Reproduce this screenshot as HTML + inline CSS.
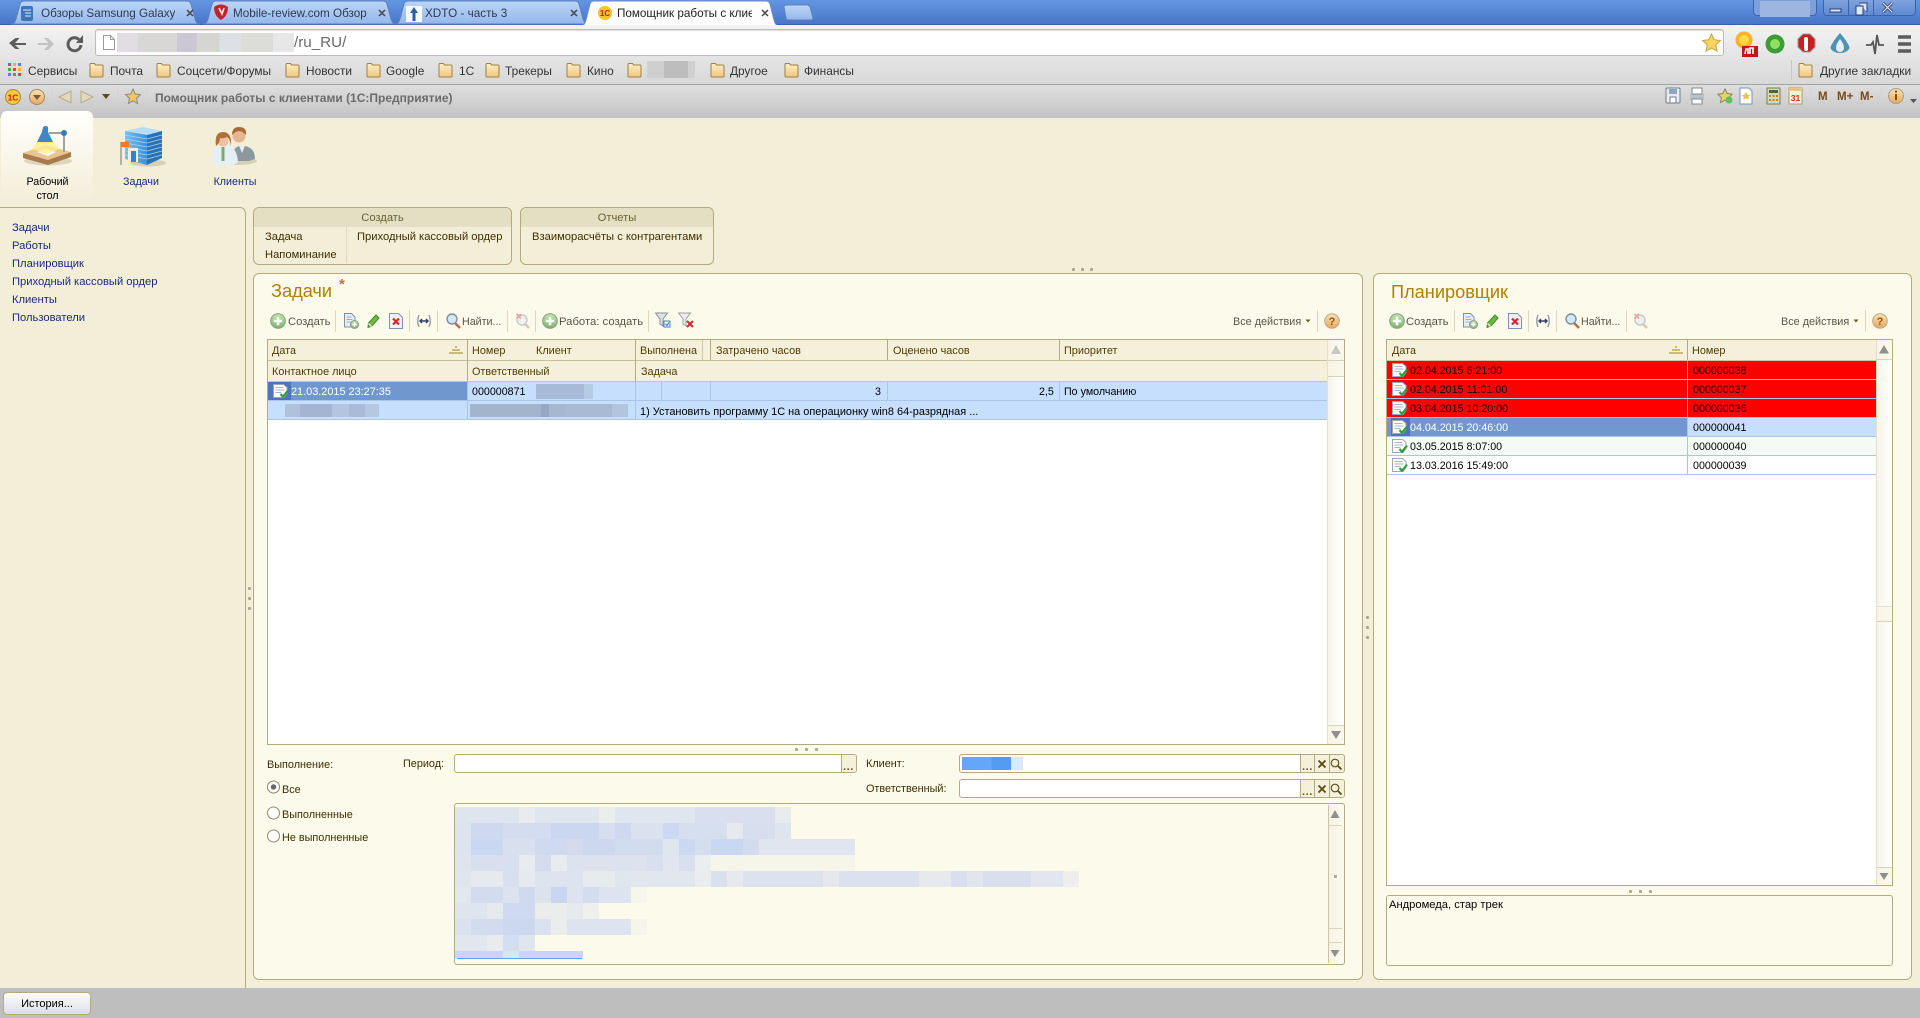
<!DOCTYPE html>
<html lang="ru"><head><meta charset="utf-8"><title>Помощник работы с клиентами</title>
<style>
html,body{margin:0;padding:0;width:1920px;height:1018px;overflow:hidden;background:#f3eed8}
body{position:relative;font:11.2px/14px "Liberation Sans","Noto Sans CJK SC",sans-serif;color:#3f3000}
div,span,svg{position:absolute}
svg{overflow:visible}
.t{white-space:nowrap;line-height:14px;height:14px;margin-top:1px}
.n{font-size:10.7px}
.b{background:#fff}
.lk{color:#1a2b80;left:12px}
.tb{color:#5a5545}
.hd{color:#4f3c00;font-size:10.85px}
.k{color:#000}
.w{color:#fff}
.lb{color:#3c2e00;font-size:10.85px}
.dv{width:1px;height:22px;top:310px;background:#dcd7bd}
.dot{width:3px;height:3px;background:#aca88f;border-radius:1px}
.line{background:#b3ab7f}
.rl{background:#a9c6e8;height:1px}
.m rect{height:1px}
.tabt{font-size:11.7px;color:#2d3a55;overflow:hidden;top:6px;height:15px;line-height:15px;white-space:nowrap}
.bm{font-size:11.9px;color:#333;top:64px;height:14px;line-height:14px;white-space:nowrap}
.sbtn{background:linear-gradient(90deg,#f7f4e4,#fbf9ee);border-bottom:1px solid #d8d4bc}
</style></head><body>
<svg width="0" height="0" style="left:0;top:0"><defs>
<linearGradient id="gt" x1="0" y1="0" x2="0" y2="1"><stop offset="0" stop-color="#bdd5f6"/><stop offset="1" stop-color="#94b8ea"/></linearGradient>
<linearGradient id="gg" x1="0" y1="0" x2="0" y2="1"><stop offset="0" stop-color="#c5e3b0"/><stop offset="1" stop-color="#78b868"/></linearGradient>
<linearGradient id="go" x1="0" y1="0" x2="0" y2="1"><stop offset="0" stop-color="#fbe3b4"/><stop offset="1" stop-color="#e7a75a"/></linearGradient>
<linearGradient id="gf" x1="0" y1="0" x2="0" y2="1"><stop offset="0" stop-color="#fdeec6"/><stop offset="1" stop-color="#f0c77e"/></linearGradient>
<linearGradient id="gb" x1="0" y1="0" x2="1" y2="0"><stop offset="0" stop-color="#7cc0f0"/><stop offset="1" stop-color="#3a90d8"/></linearGradient>
<symbol id="plus" viewBox="0 0 16 16"><circle cx="8" cy="8" r="7.3" fill="url(#gg)" stroke="#8e9a86"/><path d="M8 3.8v8.4M3.8 8h8.4" stroke="#fff" stroke-width="2.6"/></symbol>
<symbol id="nd" viewBox="0 0 16 16"><path d="M1.5 .5h7l3.500 3.500v10h-10.500z" fill="#e8eef6" stroke="#7d93ad"/><path d="M3.500 4h5M3.500 6.500h6M3.500 9h4" stroke="#9ab0c8"/><circle cx="11.500" cy="11.500" r="4" fill="url(#gg)" stroke="#8e9a86"/><path d="M11.500 9.300v4.400M9.300 11.500h4.400" stroke="#fff" stroke-width="1.500"/></symbol>
<symbol id="pen" viewBox="0 0 13 14"><path d="M9 1l3 3-7 8-4 1.500L1.500 9z" fill="#6fbb3f" stroke="#3e8a2a"/><path d="M1.500 9.500l3 3" stroke="#dcecc8" stroke-width="1.500"/></symbol>
<symbol id="xd" viewBox="0 0 14 16"><path d="M.5.5h9l4 4v11h-13z" fill="#eef3f9" stroke="#7d93ad"/><path d="M4 5.500l6 6M10 5.500l-6 6" stroke="#d6242a" stroke-width="2.200"/></symbol>
<symbol id="ar" viewBox="0 0 16 14"><path d="M3 1Q.5 7 3 13M13 1q2.500 6 0 12" fill="none" stroke="#8a94a6" stroke-width="1.300"/><path d="M4 7h8M6 5L4 7l2 2M10 5l2 2-2 2" fill="none" stroke="#2d3f66" stroke-width="1.400"/></symbol>
<symbol id="mg" viewBox="0 0 15 16"><path d="M9 10l5 5" stroke="#b46b3e" stroke-width="2.400"/><circle cx="6" cy="6" r="5" fill="#d5e6f7" stroke="#7d8ea3" stroke-width="1.400"/></symbol>
<symbol id="mx" viewBox="0 0 16 16"><path d="M9 10l5 5" stroke="#dcc4ae" stroke-width="2.400"/><circle cx="7" cy="7" r="5" fill="#eef1f2" stroke="#c9c9c4" stroke-width="1.400"/><path d="M1.500 1l4.500 4.500M6 1L1.500 5.500" stroke="#e4a5a0" stroke-width="1.800"/></symbol>
<symbol id="fn" viewBox="0 0 16 16"><path d="M.5 1h12l-4.500 6v7l-3 -2v-5z" fill="#dfe2e4" stroke="#868e96"/><path d="M9 9h6v6H9z" fill="#eaf3fb" stroke="#4d83bf"/><path d="M10.500 12l1.500 1.500 2-3" fill="none" stroke="#2e6fb8"/></symbol>
<symbol id="fx" viewBox="0 0 16 16"><path d="M.5 1h12l-4.500 6v7l-3 -2v-5z" fill="#ebecec" stroke="#9aa0a5"/><path d="M9 9l6 6M15 9l-6 6" stroke="#cf2a2a" stroke-width="2"/></symbol>
<symbol id="hp" viewBox="0 0 16 16"><circle cx="8" cy="8" r="7.300" fill="url(#go)" stroke="#bda98a"/><text x="8" y="12" text-anchor="middle" font-family="Liberation Sans" font-size="11" font-weight="bold" fill="#8a5a1f">?</text></symbol>
<symbol id="chk" viewBox="0 0 16 14"><path d="M.5 .5h10l3.500 3v6l-3 4H.5z" fill="#fff" stroke="#9aa8ba"/><path d="M2.500 3.500h8M2.500 6h9M2.500 8.500h6" stroke="#a6b4c6"/><path d="M7.500 10l2.500 2.800L15 6.500" fill="none" stroke="#2e9e3a" stroke-width="2.200"/></symbol>
<symbol id="fo" viewBox="0 0 15 16"><path d="M1 4V2.500Q1 1.500 2 1.500h3.500l1 1.500H13q1 0 1 1v10q0 1-1 1H2q-1 0-1-1z" fill="url(#gf)" stroke="#a08043"/></symbol>
<symbol id="dn" viewBox="0 0 12 6"><path d="M1 0h10L6 6z" fill="currentColor"/></symbol>
<symbol id="sort" viewBox="0 0 14 8"><path d="M6 0h2v2H6zM3 3h8v2H3zM0 6h14v2H0z" fill="#c9bb7d"/></symbol>
</defs></svg>

<!-- browser tab strip -->
<div style="left:0;top:0;width:1920px;height:25px;background:linear-gradient(#6396e2,#4976c8);border-bottom:1px solid #3c5fa8;box-sizing:border-box"></div>
<svg style="left:0;top:0" width="830" height="26">
<path d="M11 24c3 0 4-2 5-5l4-15q1-3 4-3h163q3 0 4 3l4 15c1 3 2 5 5 5z" fill="url(#gt)" stroke="#5b80bf"/>
<path d="M203 24c3 0 4-2 5-5l4-15q1-3 4-3h167q3 0 4 3l4 15c1 3 2 5 5 5z" fill="url(#gt)" stroke="#5b80bf"/>
<path d="M395 24c3 0 4-2 5-5l4-15q1-3 4-3h167q3 0 4 3l4 15c1 3 2 5 5 5z" fill="url(#gt)" stroke="#5b80bf"/>
<path d="M580 26c3 0 5-2 6-6l4-16q1-3 4-3h172q3 0 4 3l4 16c1 4 3 6 6 6z" fill="#fdfdfd" stroke="#6a8bc4"/>
<path d="M784 7q0-2 2-2h21q2 0 3 2l3 11q0 2-2 2h-22q-3 0-3-2z" fill="url(#gt)" stroke="#5b80bf"/>
<rect x="21" y="6" width="12" height="15" rx="2" fill="#3f74b8"/><path d="M23 10h8M25 13h6M25 16h6" stroke="#dbe7f6"/>
<path d="M214 7q7-5 14 0 0 9-7 13-7-4-7-13z" fill="#c8232c"/><path d="M219 8l3 6 2-6" fill="none" stroke="#fff" stroke-width="1.500"/>
<rect x="406" y="6" width="16" height="16" fill="#f4f7fb"/><path d="M414 7l4 6h-2.500v8h-3v-8H410z" fill="#2f5f9e"/>
<circle cx="605" cy="13" r="7" fill="#f6c230"/><text x="605" y="16" text-anchor="middle" font-family="Liberation Sans" font-size="8" font-weight="bold" fill="#c8201c">1С</text>
<path d="M187 10l6 6M193 10l-6 6M379 10l6 6M385 10l-6 6M571 10l6 6M577 10l-6 6M762 10l6 6M768 10l-6 6" stroke="#444" stroke-width="1.500"/>
</svg>
<div class="tabt" style="left:41px;width:134px">Обзоры Samsung Galaxy</div>
<div class="tabt" style="left:233px;width:137px">Mobile-review.com Обзор</div>
<div class="tabt" style="left:425px;width:130px">XDTO - часть 3</div>
<div class="tabt" style="left:617px;width:135px;color:#222">Помощник работы с клиентами</div>
<!-- window controls -->
<div style="left:1753px;top:0;width:64px;height:16px;background:#7a9fdc;border:1px solid #3f62a5;border-top:0;border-radius:0 0 4px 4px;box-sizing:border-box"></div>
<div style="left:1760px;top:1px;width:50px;height:16px;background:#9db6df"></div>
<div style="left:1823px;top:0;width:93px;height:16px;background:linear-gradient(#7ea3de,#5f8ad3);border:1px solid #3f62a5;border-top:0;border-radius:0 0 4px 4px;box-sizing:border-box"></div>
<div style="left:1848px;top:0;width:1px;height:16px;background:#3f62a5"></div>
<div style="left:1873px;top:0;width:1px;height:16px;background:#3f62a5"></div>
<svg style="left:1823px;top:0" width="93" height="16"><path d="M7 9h11v3H7z" fill="#dfe8f6" stroke="#2a3f70"/><path d="M33 6h7v9h-7zM36 3h8v9" fill="#dfe8f6" stroke="#2a3f70"/><path d="M60 3l9 9M69 3l-9 9" stroke="#2a3f70" stroke-width="3"/><path d="M60 3l9 9M69 3l-9 9" stroke="#eef" stroke-width="1.200"/></svg>

<!-- address toolbar -->
<div style="left:0;top:25px;width:1920px;height:59px;background:linear-gradient(#f3f3f3,#d8d8d8)"></div>
<svg style="left:0;top:25px" width="120" height="34">
<path d="M26 18H15l4.500-5h-4L9 18l6.500 6h4L15 20h11z" fill="#5c5c5c"/>
<path d="M38 18h10.500L44 13h4l6 6-6 6h-4l4.500-5H38z" fill="#c2c2c2"/>
<path d="M81 20a6.500 6.500 0 1 1-2-5.500" fill="none" stroke="#5c5c5c" stroke-width="3"/><path d="M83 10v8h-7z" fill="#5c5c5c"/>
</svg>
<div style="left:95px;top:29px;width:1629px;height:27px;background:#fff;border:1px solid #bcbcbc;border-radius:3px;box-sizing:border-box;box-shadow:inset 0 1px 1px #ddd"></div>
<svg style="left:103px;top:35px" width="12" height="15"><path d="M.5.5h7l4 4v10H.5z" fill="#fff" stroke="#9a9a9a"/><path d="M7.500.5v4h4" fill="none" stroke="#9a9a9a"/></svg>
<div style="left:117px;top:33px;width:177px;height:19px;background:linear-gradient(90deg,#e2dde2 0 12%,#d9d6d6 12% 34%,#ccc7d4 34% 45%,#d5d5d1 45% 58%,#dde1e5 58% 70%,#dcdcd9 70% 88%,#e7e7e7 88%)"></div>
<div class="t" style="left:294px;top:33px;margin:0;height:19px;line-height:19px;font-size:15.2px;color:#6a6a6a">/ru_RU/</div>
<svg style="left:1702px;top:33px" width="19" height="19" viewBox="0 0 19 19"><path d="M9.500 1l2.700 5.700 6.200.8-4.600 4.300 1.200 6.200-5.500-3-5.500 3 1.200-6.200L.600 7.500l6.200-.8z" fill="#f7d560" stroke="#c9a43a"/></svg>
<svg style="left:1732px;top:30px" width="185" height="30">
<circle cx="12" cy="10" r="8.500" fill="#f7b228"/><circle cx="12" cy="10" r="5" fill="#ffd84a"/>
<rect x="10" y="16" width="16" height="11" fill="#c01818"/><path d="M13 24l1-5h2v4h2v-5h3v6" fill="none" stroke="#fff" stroke-width="1.600"/>
<circle cx="43" cy="14" r="9.500" fill="#3e9c36"/><circle cx="43" cy="14" r="5" fill="#8ee060"/>
<path d="M71 4h7l5 5v8l-5 5h-7l-5-5V9z" fill="#c81e1e" stroke="#9a9a9a"/><rect x="72" y="7" width="4" height="14" rx="2" fill="#fff"/>
<path d="M108 3q7 8 9.500 14a9.500 6 0 0 1-19 0Q101 11 108 3z" fill="#4d93b8"/><path d="M108 9q4 5 4 9a4 4 0 0 1-8 0q0-4 4-9z" fill="#e8eef2"/>
<path d="M134 15h5l2-3 2 12 2-19 2 10h5" fill="none" stroke="#555" stroke-width="1.800"/>
<path d="M166 7h13M166 14h13M166 21h13" stroke="#5c5c5c" stroke-width="3.400"/>
</svg>
<!-- bookmarks -->
<svg style="left:8px;top:63px" width="14" height="14"><g fill="#d94a3c"><rect width="3" height="3"/><rect x="5" width="3" height="3" fill="#e8b23a"/><rect x="10" width="3" height="3" fill="#3a8de8"/><rect y="5" width="3" height="3" fill="#3fae4f"/><rect x="5" y="5" width="3" height="3"/><rect x="10" y="5" width="3" height="3" fill="#e8b23a"/><rect y="10" width="3" height="3" fill="#3a8de8"/><rect x="5" y="10" width="3" height="3" fill="#3fae4f"/><rect x="10" y="10" width="3" height="3"/></g></svg>
<div class="bm" style="left:28px">Сервисы</div>
<svg style="left:89px;top:62px" width="15" height="16"><use href="#fo"/></svg><div class="bm" style="left:110px">Почта</div>
<svg style="left:156px;top:62px" width="15" height="16"><use href="#fo"/></svg><div class="bm" style="left:177px">Соцсети/Форумы</div>
<svg style="left:285px;top:62px" width="15" height="16"><use href="#fo"/></svg><div class="bm" style="left:306px">Новости</div>
<svg style="left:366px;top:62px" width="15" height="16"><use href="#fo"/></svg><div class="bm" style="left:386px">Google</div>
<svg style="left:438px;top:62px" width="15" height="16"><use href="#fo"/></svg><div class="bm" style="left:459px">1С</div>
<svg style="left:485px;top:62px" width="15" height="16"><use href="#fo"/></svg><div class="bm" style="left:505px">Трекеры</div>
<svg style="left:566px;top:62px" width="15" height="16"><use href="#fo"/></svg><div class="bm" style="left:587px">Кино</div>
<svg style="left:627px;top:62px" width="15" height="16"><use href="#fo"/></svg>
<div style="left:647px;top:61px;width:48px;height:17px;background:linear-gradient(90deg,#cfcfcf 0 35%,#bdbdbd 35% 85%,#d0d0d0 85%)"></div>
<svg style="left:710px;top:62px" width="15" height="16"><use href="#fo"/></svg><div class="bm" style="left:730px">Другое</div>
<svg style="left:784px;top:62px" width="15" height="16"><use href="#fo"/></svg><div class="bm" style="left:804px">Финансы</div>
<div style="left:1791px;top:60px;width:1px;height:20px;background:#c8c8c8"></div>
<svg style="left:1798px;top:62px" width="15" height="16"><use href="#fo"/></svg><div class="bm" style="left:1820px">Другие закладки</div>
<div style="left:0;top:84px;width:1920px;height:1px;background:#a3a3a3"></div>

<!-- 1C command panel -->
<div style="left:0;top:85px;width:1920px;height:33px;background:linear-gradient(#dedede,#c4c4c4)"></div>
<svg style="left:0;top:85px" width="150" height="30">
<circle cx="13" cy="12" r="7.500" fill="#f8c93c" stroke="#a28a50"/><text x="13" y="15.500" text-anchor="middle" font-family="Liberation Sans" font-size="8.500" font-weight="bold" fill="#c8201c">1С</text>
<circle cx="37" cy="12" r="7.500" fill="url(#go)" stroke="#a28a70"/><path d="M33 10h8l-4 5z" fill="#7a5a35"/>
<path d="M52 2v20" stroke="#d2d2d2"/>
<path d="M71 6v12L59 12z" fill="#e2d9b8" stroke="#b6ad90"/><path d="M81 6v12l12-6z" fill="#e2d9b8" stroke="#b6ad90"/>
<path d="M102 9h8l-4 5z" fill="#5e4a12"/><path d="M118 2v20M147 2v20" stroke="#d2d2d2"/>
<path d="M133 4l2.200 5 5.300.6-4 3.600 1.100 5.300-4.600-2.700-4.600 2.700 1.100-5.300-4-3.600 5.300-.6z" fill="#eec566" stroke="#8d8d80"/>
</svg>
<div class="t" style="left:155px;top:90px;font-size:12px;font-weight:bold;color:#6c6c6c">Помощник работы с клиентами (1С:Предприятие)</div>
<svg style="left:1660px;top:85px" width="260" height="30">
<rect x="6" y="3" width="14" height="15" rx="1" fill="#e8ecef" stroke="#6d7e92"/><rect x="9" y="4" width="8" height="5" fill="#8fa6bd"/><rect x="10" y="12" width="6" height="6" fill="#fff" stroke="#6d7e92"/>
<rect x="30" y="9" width="14" height="6" fill="#bac2c9"/><rect x="32" y="3" width="10" height="6" fill="#fff" stroke="#8a8a8a"/><rect x="32" y="14" width="10" height="5" fill="#fff" stroke="#8a8a8a"/>
<path d="M65 4l2.200 4.500 5 .7-3.600 3.400 .9 5-4.500-2.400-4.500 2.400 .9-5-3.600-3.400 5-.7z" fill="#e5d36b" stroke="#8c8a60"/><circle cx="69" cy="15" r="3.500" fill="#5fc25c"/>
<path d="M80 3h9l3 3v13H80z" fill="#fff" stroke="#7d93ad"/><path d="M86 7l1.500 2.700 2.800.4-2 1.900.5 2.800-2.800-1.400-2.800 1.400.5-2.800-2-1.900 2.800-.4z" fill="#e7c14f"/>
<rect x="107" y="3" width="13" height="16" fill="#cfdcb6" stroke="#7f7a52"/><rect x="109" y="5" width="9" height="3" fill="#49693a"/><path d="M109 10h2v2h-2zm3.500 0h2v2h-2zm3.500 0h2v2h-2zm-7 4h2v2h-2zm3.500 0h2v2h-2zm3.500 0h2v2h-2z" fill="#c9822b"/>
<rect x="129" y="3" width="13" height="16" fill="#fdf5da" stroke="#b09a6a"/><rect x="129" y="3" width="13" height="3" fill="#e2c885"/>
<text x="135.500" y="16" text-anchor="middle" font-family="Liberation Sans" font-size="8.500" font-weight="bold" fill="#d42b1c">31</text>
<circle cx="236" cy="11" r="7.500" fill="url(#go)" stroke="#a89f86"/><rect x="235" y="9" width="2" height="6" fill="#7a4f12"/><rect x="235" y="5.500" width="2" height="2" fill="#7a4f12"/>
<path d="M250 14h7l-3.500 4z" fill="#555"/>
<path d="M101 2v18M125 2v18M151 2v18M221 2v18" stroke="#d2d2d2"/>
</svg>
<div class="t" style="left:1818px;top:89px;font-weight:bold;font-size:11.500px;color:#7a4a1c">M</div>
<div class="t" style="left:1837px;top:89px;font-weight:bold;font-size:11.500px;color:#7a4a1c">M+</div>
<div class="t" style="left:1860px;top:89px;font-weight:bold;font-size:11.500px;color:#7a4a1c">M-</div>

<!-- sections panel -->
<div style="left:1px;top:111px;width:92px;height:90px;border-radius:6px 6px 0 0;background:linear-gradient(#fffffc,#f3eed8)"></div>
<svg style="left:22px;top:124px" width="52" height="44" viewBox="0 0 52 44">
<ellipse cx="26" cy="37" rx="24" ry="4.500" fill="#dcd6bc"/>
<path d="M1 29L23 21l26 7-23 8z" fill="#e8c690"/><path d="M1 29l25 7v5L1 34zM49 28l-23 8v5l23-8z" fill="#a87a4c"/>
<path d="M15 28l9-3 10 3-8 4z" fill="#fff"/>
<path d="M16 17h14l8 8-14 5-14-5z" fill="#fdee90" opacity=".8"/>
<path d="M21 3q3-2 5 0v5l5 10H15l5-10z" fill="#3f86c6"/><path d="M27 9h15v19" fill="none" stroke="#a2a2a2" stroke-width="2"/><circle cx="42" cy="9" r="3" fill="#2f7fb8"/>
</svg>
<svg style="left:118px;top:125px" width="50" height="44" viewBox="0 0 50 44">
<ellipse cx="30" cy="38" rx="18" ry="3.500" fill="#d5d0b6"/>
<path d="M7 6l18-4 19 4-15 4z" fill="#b6dcf6"/><path d="M7 6l22 4v30L7 34z" fill="url(#gb)"/><path d="M29 10l15-4v27l-15 7z" fill="#2a72b8"/>
<path d="M7 10l22 4 15-4M7 14l22 4 15-4M7 18l22 4 15-4M7 22l22 4 15-4M7 26l22 4 15-4M7 30l22 4 15-4" fill="none" stroke="#a9d3f0" stroke-width=".700"/>
<rect x="10" y="23" width="10" height="14" fill="#e8f0f5"/><rect x="13" y="26" width="5" height="11" fill="#2f84c8"/>
<path d="M3 17v23" stroke="#9c9c9c" stroke-width="1.500"/><rect x="3" y="17" width="8" height="5" fill="#ee7b33"/>
</svg>
<svg style="left:211px;top:126px" width="48" height="42" viewBox="0 0 48 42">
<ellipse cx="24" cy="35" rx="22" ry="4" fill="#d5d0b6"/>
<path d="M22 33q-1-11 6-13h6q10 2 10 13l-6 2H26z" fill="#8d979e"/><path d="M28 20l3 7 3-7z" fill="#e6edf0"/>
<circle cx="28" cy="10" r="6.500" fill="#e8b592"/><path d="M21 9q0-8 7-8 8 0 7 8-4-4-7-4t-7 4z" fill="#a96a33"/>
<path d="M2 36q-1-14 7-17h8q9 3 10 17l-4 3H6z" fill="#e4f0f5"/><path d="M12 21v14" stroke="#79ae62" stroke-width="3"/>
<circle cx="12" cy="15" r="5.500" fill="#edc2a3"/><path d="M5 20Q3 6 12 6t8 14q-1-7-4-9-4 2-7 1 0 5-4 8z" fill="#b0703a"/>
</svg>
<div class="t k n" style="left:0;width:95px;text-align:center;top:174px">Рабочий</div>
<div class="t k n" style="left:0;width:95px;text-align:center;top:188px">стол</div>
<div class="t lk n" style="left:101px;width:80px;text-align:center;top:174px">Задачи</div>
<div class="t lk n" style="left:195px;width:80px;text-align:center;top:174px">Клиенты</div>

<!-- left nav -->
<div style="left:-6px;top:207px;width:250px;height:790px;border:1px solid #b3ab7f;border-radius:0 6px 0 0;box-sizing:content-box"></div>
<div class="t lk" style="top:220px">Задачи</div>
<div class="t lk" style="top:238px">Работы</div>
<div class="t lk" style="top:256px">Планировщик</div>
<div class="t lk" style="top:274px">Приходный кассовый ордер</div>
<div class="t lk" style="top:292px">Клиенты</div>
<div class="t lk" style="top:310px">Пользователи</div>

<!-- command groups -->
<div style="left:253px;top:207px;width:259px;height:58px;box-sizing:border-box;border:1px solid #b3ab7f;border-radius:6px;overflow:hidden"><div style="left:0;top:0;width:257px;height:19px;background:#e3dfc2"></div></div>
<div class="t" style="left:253px;width:259px;text-align:center;top:210px;color:#6a6238">Создать</div>
<div class="t" style="left:265px;top:229px">Задача</div>
<div class="t" style="left:265px;top:247px">Напоминание</div>
<div style="left:346px;top:226px;width:1px;height:37px;background:#dedabf"></div>
<div class="t" style="left:357px;top:229px">Приходный кассовый ордер</div>
<div style="left:520px;top:207px;width:194px;height:58px;box-sizing:border-box;border:1px solid #b3ab7f;border-radius:6px;overflow:hidden"><div style="left:0;top:0;width:192px;height:19px;background:#e3dfc2"></div></div>
<div class="t" style="left:520px;width:194px;text-align:center;top:210px;color:#6a6238">Отчеты</div>
<div class="t" style="left:532px;top:229px">Взаиморасчёты с контрагентами</div>

<div class="dot" style="left:1072px;top:268px"></div><div class="dot" style="left:1081px;top:268px"></div><div class="dot" style="left:1090px;top:268px"></div>
<div class="dot" style="left:248px;top:587px"></div><div class="dot" style="left:248px;top:597px"></div><div class="dot" style="left:248px;top:607px"></div>
<div class="dot" style="left:1366px;top:616px"></div><div class="dot" style="left:1366px;top:626px"></div><div class="dot" style="left:1366px;top:636px"></div>

<!-- Card: Задачи -->
<div style="left:253px;top:273px;width:1110px;height:707px;box-sizing:border-box;background:#fcfaeb;border:1px solid #b3ab7f;border-radius:6px"></div>
<div class="t" style="left:271px;top:280px;margin:0;height:22px;line-height:22px;font-size:18.2px;color:#b08000">Задачи</div>
<div class="t" style="left:339px;top:278px;margin:0;font-size:15px;font-weight:bold;color:#b08000">*</div>
<svg style="left:270px;top:313px" width="16" height="16"><use href="#plus"/></svg><div class="t tb" style="left:288px;top:314px">Создать</div>
<div class="dv" style="left:335px"></div>
<svg style="left:343px;top:313px" width="16" height="16"><use href="#nd"/></svg>
<svg style="left:367px;top:314px" width="13" height="14"><use href="#pen"/></svg>
<svg style="left:389px;top:313px" width="14" height="16"><use href="#xd"/></svg>
<div class="dv" style="left:409px"></div>
<svg style="left:416px;top:314px" width="16" height="14"><use href="#ar"/></svg>
<div class="dv" style="left:437px"></div>
<svg style="left:446px;top:313px" width="15" height="16"><use href="#mg"/></svg><div class="t tb n" style="left:462px;top:314px">Найти...</div>
<div class="dv" style="left:507px"></div>
<svg style="left:515px;top:313px" width="16" height="16"><use href="#mx"/></svg>
<div class="dv" style="left:535px"></div>
<svg style="left:542px;top:313px" width="16" height="16"><use href="#plus"/></svg><div class="t tb" style="left:559px;top:314px;font-size:11.3px">Работа: создать</div>
<div class="dv" style="left:648px"></div>
<svg style="left:655px;top:312px" width="16" height="16"><use href="#fn"/></svg>
<svg style="left:678px;top:312px" width="16" height="16"><use href="#fx"/></svg>
<div class="t tb" style="left:1233px;top:314px;font-size:10.85px">Все действия</div>
<svg style="left:1305px;top:319px;color:#6b5a1f" width="6" height="4"><use href="#dn"/></svg>
<div class="dv" style="left:1317px"></div>
<svg style="left:1324px;top:313px" width="16" height="16"><use href="#hp"/></svg>

<!-- Table left -->
<div class="b" style="left:267px;top:339px;width:1078px;height:406px;box-sizing:border-box;border:1px solid #b3ab7f"></div>
<div style="left:268px;top:340px;width:1059px;height:41px;background:#f4f0dc"></div>
<div class="line" style="left:268px;top:360px;width:1059px;height:1px;opacity:.7"></div>
<div class="line" style="left:268px;top:381px;width:1059px;height:1px;opacity:.7"></div>
<div class="line" style="left:467px;top:340px;width:1px;height:41px"></div>
<div class="line" style="left:635px;top:340px;width:1px;height:41px"></div>
<div class="line" style="left:702px;top:340px;width:1px;height:20px;opacity:.6"></div>
<div class="line" style="left:710px;top:340px;width:1px;height:20px"></div>
<div class="line" style="left:887px;top:340px;width:1px;height:20px"></div>
<div class="line" style="left:1059px;top:340px;width:1px;height:20px"></div>
<div class="t hd" style="left:272px;top:343px">Дата</div>
<svg style="left:449px;top:346px" width="14" height="8"><use href="#sort"/></svg>
<div class="t hd" style="left:472px;top:343px">Номер</div>
<div class="t hd" style="left:536px;top:343px">Клиент</div>
<div class="t hd" style="left:640px;top:343px">Выполнена</div>
<div class="t hd" style="left:716px;top:343px">Затрачено часов</div>
<div class="t hd" style="left:893px;top:343px">Оценено часов</div>
<div class="t hd" style="left:1064px;top:343px">Приоритет</div>
<div class="t hd" style="left:272px;top:364px">Контактное лицо</div>
<div class="t hd" style="left:472px;top:364px">Ответственный</div>
<div class="t hd" style="left:641px;top:364px">Задача</div>

<div style="left:268px;top:382px;width:1059px;height:38px;background:#c5dffc"></div>
<div style="left:268px;top:382px;width:199px;height:18px;background:#7098cf"></div>
<div style="left:268px;top:382px;width:23px;height:18px;background:#4f72c1"></div>
<div class="rl" style="left:268px;top:400px;width:1059px"></div>
<div class="rl" style="left:268px;top:419px;width:1059px"></div>
<div class="rl" style="left:467px;top:382px;width:1px;height:37px"></div>
<div class="rl" style="left:635px;top:382px;width:1px;height:37px"></div>
<div class="rl" style="left:661px;top:382px;width:1px;height:18px"></div>
<div class="rl" style="left:710px;top:382px;width:1px;height:18px"></div>
<div class="rl" style="left:887px;top:382px;width:1px;height:18px"></div>
<div class="rl" style="left:1059px;top:382px;width:1px;height:18px"></div>
<svg style="left:273px;top:384px" width="16" height="14"><use href="#chk"/></svg>
<div class="t w" style="left:291px;top:384px;font-size:10.9px">21.03.2015 23:27:35</div>
<div class="t k n" style="left:472px;top:384px">000000871</div>
<div style="left:536px;top:384px;width:48px;height:15px;background:#a7bbd8"></div><div style="left:584px;top:384px;width:9px;height:15px;background:#b5cbe6"></div>
<div class="t k n" style="left:875px;top:384px">3</div>
<div class="t k n" style="left:1039px;top:384px">2,5</div>
<div class="t k n" style="left:1064px;top:384px">По умолчанию</div>
<div style="left:285px;top:404px;width:94px;height:13px;background:linear-gradient(90deg,#afc2dc 0 16%,#a3b5d0 16% 50%,#b3c5df 50% 68%,#a9bbd6 68% 85%,#b5c8e2 85%)"></div>
<div style="left:470px;top:404px;width:158px;height:13px;background:linear-gradient(90deg,#a3b5cd 0 45%,#96a8c2 45% 50%,#a6b8d0 50% 60%,#a9bbd4 60% 90%,#b3c5de 90%)"></div>
<div class="t k" style="left:640px;top:404px;font-size:10.95px">1) Установить программу 1С на операционку win8 64-разрядная ...</div>
<!-- scrollbar left table -->
<div style="left:1327px;top:340px;width:17px;height:404px;background:linear-gradient(90deg,#f7f5ea,#fff);border-left:1px solid #e4e0cc;box-sizing:border-box"></div>
<div class="sbtn" style="left:1328px;top:340px;width:16px;height:20px"></div>
<div class="sbtn" style="left:1328px;top:361px;width:16px;height:15px"></div>
<div class="sbtn" style="left:1328px;top:725px;width:16px;height:19px;border-bottom:0;border-top:1px solid #d8d4bc;box-sizing:border-box"></div>
<svg style="left:1330px;top:345px" width="12" height="10"><path d="M6 0l5 9H1z" fill="#c8c8c0"/></svg>
<svg style="left:1330px;top:731px" width="12" height="8"><path d="M6 8L1 0h10z" fill="#8f8f8f"/></svg>
<div class="dot" style="left:795px;top:748px"></div><div class="dot" style="left:805px;top:748px"></div><div class="dot" style="left:815px;top:748px"></div>

<!-- filters -->
<div class="t lb" style="left:267px;top:757px">Выполнение:</div>
<div class="t lb" style="left:403px;top:756px">Период:</div>
<div class="b" style="left:454px;top:754px;width:403px;height:19px;box-sizing:border-box;border:1px solid #b3ab7f;border-radius:3px"></div>
<div style="left:841px;top:755px;width:15px;height:17px;background:#f4f0dc;border-left:1px solid #b3ab7f;border-radius:0 3px 3px 0;box-sizing:border-box"></div>
<div class="t" style="left:843px;top:759px;font-weight:bold;color:#6b5a1f;letter-spacing:.5px">...</div>
<div class="t lb" style="left:866px;top:756px">Клиент:</div>
<div class="b" style="left:959px;top:754px;width:386px;height:19px;box-sizing:border-box;border:1px solid #b3ab7f;border-radius:3px"></div>
<div style="left:962px;top:757px;width:49px;height:13px;background:linear-gradient(90deg,#64a6fa 0 60%,#549bf4 60%)"></div>
<div style="left:1011px;top:757px;width:12px;height:13px;background:#d9e8fc"></div>
<div class="t lb" style="left:866px;top:781px">Ответственный:</div>
<div class="b" style="left:959px;top:779px;width:386px;height:19px;box-sizing:border-box;border:1px solid #b3ab7f;border-radius:3px"></div>
<div style="left:1300px;top:755px;width:44px;height:17px;background:#f4f0dc;border-left:1px solid #b3ab7f;border-radius:0 3px 3px 0;box-sizing:border-box"></div>
<div style="left:1300px;top:780px;width:44px;height:17px;background:#f4f0dc;border-left:1px solid #b3ab7f;border-radius:0 3px 3px 0;box-sizing:border-box"></div>
<div style="left:1314px;top:755px;width:1px;height:17px;background:#b3ab7f"></div><div style="left:1329px;top:755px;width:1px;height:17px;background:#b3ab7f"></div>
<div style="left:1314px;top:780px;width:1px;height:17px;background:#b3ab7f"></div><div style="left:1329px;top:780px;width:1px;height:17px;background:#b3ab7f"></div>
<div class="t" style="left:1302px;top:759px;font-weight:bold;color:#6b5a1f;letter-spacing:.5px">...</div>
<div class="t" style="left:1302px;top:784px;font-weight:bold;color:#6b5a1f;letter-spacing:.5px">...</div>
<svg style="left:1316px;top:758px" width="28" height="40">
<path d="M2.500 2.500l7 7M9.500 2.500l-7 7M2.500 27.500l7 7M9.500 27.500l-7 7" stroke="#5a4a10" stroke-width="1.800"/>
<g fill="none" stroke="#5a4a10"><circle cx="19" cy="5" r="3.800" stroke-width="1.100"/><path d="M22 8l3.500 3.500" stroke-width="1.800"/><circle cx="19" cy="30" r="3.800" stroke-width="1.100"/><path d="M22 33l3.500 3.500" stroke-width="1.800"/></g>
</svg>
<svg style="left:266px;top:780px" width="16" height="64">
<g fill="#fff" stroke="#8f8a6c"><circle cx="7.500" cy="7" r="6"/><circle cx="7.500" cy="33" r="6"/><circle cx="7.500" cy="56" r="6"/></g><circle cx="7.500" cy="7" r="2.700" fill="#666"/>
</svg>
<div class="t lb" style="left:282px;top:782px">Все</div>
<div class="t lb" style="left:282px;top:807px">Выполненные</div>
<div class="t lb" style="left:282px;top:830px">Не выполненные</div>

<!-- pixelated text box -->
<div style="left:454px;top:803px;width:891px;height:162px;box-sizing:border-box;border:1px solid #b3ab7f;border-radius:3px"></div>
<svg class="m" style="left:455px;top:807px" width="624" height="160" viewBox="0 0 39 10" shape-rendering="crispEdges">
<rect x="0" y="0" width="4" fill="#dfe5ef"/><rect x="4" y="0" width="1" fill="#e9ecef"/><rect x="5" y="0" width="4" fill="#e0e6ef"/><rect x="9" y="0" width="1" fill="#ebedef"/><rect x="10" y="0" width="5" fill="#dfe6ef"/><rect x="15" y="0" width="5" fill="#d9dfef"/><rect x="20" y="0" width="1" fill="#e8ecec"/>
<rect x="0" y="1" width="1" fill="#dde3ef"/><rect x="1" y="1" width="2" fill="#ced9ef"/><rect x="3" y="1" width="3" fill="#d4ddef"/><rect x="6" y="1" width="3" fill="#cbd7f0"/><rect x="9" y="1" width="1" fill="#d6deef"/><rect x="10" y="1" width="1" fill="#cfd8f0"/><rect x="11" y="1" width="2" fill="#dae1ef"/><rect x="13" y="1" width="1" fill="#cdd8f2"/><rect x="14" y="1" width="3" fill="#d6dfef"/><rect x="17" y="1" width="1" fill="#e6eaef"/><rect x="18" y="1" width="2" fill="#d7dfef"/><rect x="20" y="1" width="1" fill="#dfe5ef"/>
<rect x="0" y="2" width="1" fill="#dde3ef"/><rect x="1" y="2" width="2" fill="#c9d7f2"/><rect x="3" y="2" width="2" fill="#d8e0ef"/><rect x="5" y="2" width="2" fill="#cfd9ef"/><rect x="7" y="2" width="1" fill="#d6daec"/><rect x="8" y="2" width="2" fill="#cdd8ef"/><rect x="10" y="2" width="3" fill="#d2dcef"/><rect x="13" y="2" width="1" fill="#dfe6ef"/><rect x="14" y="2" width="1" fill="#cbd8f2"/><rect x="15" y="2" width="1" fill="#d5deef"/><rect x="16" y="2" width="2" fill="#c8d7f2"/><rect x="18" y="2" width="1" fill="#d3dcef"/><rect x="19" y="2" width="6" fill="#e0e5ef"/>
<rect x="0" y="3" width="1" fill="#dfe5ef"/><rect x="1" y="3" width="3" fill="#d8e0ef"/><rect x="4" y="3" width="1" fill="#e9ebef"/><rect x="5" y="3" width="1" fill="#d5dcee"/><rect x="6" y="3" width="1" fill="#e8ecee"/><rect x="7" y="3" width="5" fill="#dde3ee"/><rect x="12" y="3" width="1" fill="#d8dfee"/><rect x="13" y="3" width="1" fill="#e0e6ef"/><rect x="14" y="3" width="1" fill="#d8dfee"/><rect x="15" y="3" width="1" fill="#ebedee"/><rect x="16" y="3" width="9" fill="#f6f5ea"/>
<rect x="0" y="4" width="1" fill="#e0e6ef"/><rect x="1" y="4" width="2" fill="#e6e9ee"/><rect x="3" y="4" width="1" fill="#d8e0ef"/><rect x="4" y="4" width="1" fill="#e6e9ee"/><rect x="5" y="4" width="3" fill="#dde3ef"/><rect x="8" y="4" width="2" fill="#e8ebee"/><rect x="10" y="4" width="1" fill="#e0e6ee"/><rect x="11" y="4" width="4" fill="#e2e7ef"/><rect x="15" y="4" width="1" fill="#eaedee"/><rect x="16" y="4" width="1" fill="#d9e1ef"/><rect x="17" y="4" width="1" fill="#e6e9ef"/><rect x="18" y="4" width="5" fill="#dde2ef"/><rect x="23" y="4" width="1" fill="#e6e8ee"/><rect x="24" y="4" width="5" fill="#dbe1ef"/><rect x="29" y="4" width="2" fill="#e7e9ed"/><rect x="31" y="4" width="1" fill="#d9dfee"/><rect x="32" y="4" width="1" fill="#e0e5ee"/><rect x="33" y="4" width="3" fill="#dadfee"/><rect x="36" y="4" width="2" fill="#e3e6ee"/><rect x="38" y="4" width="1" fill="#eeeeec"/>
<rect x="0" y="5" width="1" fill="#e3e8ef"/><rect x="1" y="5" width="2" fill="#d3dcef"/><rect x="3" y="5" width="1" fill="#dce3ef"/><rect x="4" y="5" width="1" fill="#d0daef"/><rect x="5" y="5" width="1" fill="#dce3ef"/><rect x="6" y="5" width="1" fill="#c8d6f2"/><rect x="7" y="5" width="1" fill="#dde4ef"/><rect x="8" y="5" width="1" fill="#d4dcef"/><rect x="9" y="5" width="2" fill="#dde3ef"/><rect x="11" y="5" width="1" fill="#f7f6ea"/>
<rect x="0" y="6" width="2" fill="#dfe5ef"/><rect x="2" y="6" width="1" fill="#e6e9ed"/><rect x="3" y="6" width="2" fill="#cfdaf0"/><rect x="5" y="6" width="2" fill="#ebedec"/><rect x="7" y="6" width="1" fill="#e6e9ee"/><rect x="8" y="6" width="1" fill="#eef0eb"/>
<rect x="0" y="7" width="1" fill="#dbe2ef"/><rect x="1" y="7" width="2" fill="#d3dcef"/><rect x="3" y="7" width="2" fill="#ccd8f0"/><rect x="5" y="7" width="1" fill="#dbe2ef"/><rect x="6" y="7" width="1" fill="#ebedec"/><rect x="7" y="7" width="4" fill="#dde4ef"/><rect x="11" y="7" width="1" fill="#f5f5ea"/>
<rect x="0" y="8" width="2" fill="#e2e7ef"/><rect x="2" y="8" width="1" fill="#e9ebed"/><rect x="3" y="8" width="1" fill="#d3dff0"/><rect x="4" y="8" width="1" fill="#dfe6ee"/>
<rect x="0" y="9" width="8" style="height:.47px" fill="#c8d6f5"/><rect x="3" y="9" width="1" style="height:.47px" fill="#dde4f0"/>
</svg>
<div style="left:457px;top:958px;width:125px;height:1px;background:#6f9cf2"></div>
<div class="sbtn" style="left:1328px;top:805px;width:14px;height:21px;border-left:1px solid #c8c4aa;box-sizing:border-box"></div>
<div style="left:1328px;top:826px;width:14px;height:102px;background:linear-gradient(90deg,#f6f3e2,#fbf9ee);border-left:1px solid #c8c4aa;box-sizing:border-box"></div>
<div class="sbtn" style="left:1328px;top:928px;width:14px;height:15px;border-left:1px solid #c8c4aa;border-top:1px solid #d8d4bc;box-sizing:border-box"></div>
<div class="sbtn" style="left:1328px;top:943px;width:14px;height:20px;border-left:1px solid #c8c4aa;border-bottom:0;box-sizing:border-box"></div>
<svg style="left:1329px;top:810px" width="12" height="10"><path d="M6 0l4.500 8h-9z" fill="#8f8f8f"/></svg>
<svg style="left:1329px;top:950px" width="12" height="8"><path d="M6 7L1.500 0h9z" fill="#8f8f8f"/></svg>
<div class="dot" style="left:1334px;top:875px"></div>

<!-- Card: Планировщик -->
<div style="left:1373px;top:273px;width:539px;height:707px;box-sizing:border-box;background:#fcfaeb;border:1px solid #b3ab7f;border-radius:6px"></div>
<div class="t" style="left:1391px;top:281px;margin:0;height:22px;line-height:22px;font-size:18.2px;color:#b08000">Планировщик</div>
<svg style="left:1389px;top:313px" width="16" height="16"><use href="#plus"/></svg><div class="t tb" style="left:1406px;top:314px">Создать</div>
<div class="dv" style="left:1454px"></div>
<svg style="left:1462px;top:313px" width="16" height="16"><use href="#nd"/></svg>
<svg style="left:1486px;top:314px" width="13" height="14"><use href="#pen"/></svg>
<svg style="left:1508px;top:313px" width="14" height="16"><use href="#xd"/></svg>
<div class="dv" style="left:1528px"></div>
<svg style="left:1535px;top:314px" width="16" height="14"><use href="#ar"/></svg>
<div class="dv" style="left:1556px"></div>
<svg style="left:1565px;top:313px" width="15" height="16"><use href="#mg"/></svg><div class="t tb n" style="left:1581px;top:314px">Найти...</div>
<div class="dv" style="left:1626px"></div>
<svg style="left:1633px;top:313px" width="16" height="16"><use href="#mx"/></svg>
<div class="t tb" style="left:1781px;top:314px;font-size:10.85px">Все действия</div>
<svg style="left:1853px;top:319px;color:#6b5a1f" width="6" height="4"><use href="#dn"/></svg>
<div class="dv" style="left:1865px"></div>
<svg style="left:1872px;top:313px" width="16" height="16"><use href="#hp"/></svg>

<!-- Table right -->
<div class="b" style="left:1386px;top:339px;width:507px;height:547px;box-sizing:border-box;border:1px solid #b3ab7f"></div>
<div style="left:1387px;top:340px;width:489px;height:20px;background:#f4f0dc"></div>
<div class="line" style="left:1387px;top:360px;width:489px;height:1px;opacity:.7"></div>
<div class="line" style="left:1687px;top:340px;width:1px;height:20px"></div>
<div class="t hd" style="left:1392px;top:343px">Дата</div>
<svg style="left:1669px;top:346px" width="14" height="8"><use href="#sort"/></svg>
<div class="t hd" style="left:1692px;top:343px">Номер</div>

<div style="left:1387px;top:361px;width:489px;height:57px;background:#f00"></div>
<div style="left:1387px;top:418px;width:300px;height:18px;background:#7098cf"></div>
<div style="left:1391px;top:418px;width:19px;height:18px;background:#4f72c1"></div>
<div style="left:1688px;top:418px;width:188px;height:18px;background:#c5dffc"></div>
<div style="left:1387px;top:437px;width:489px;height:18px;background:#f4fbf4"></div>
<div class="rl" style="left:1387px;top:379px;width:489px"></div>
<div class="rl" style="left:1387px;top:398px;width:489px"></div>
<div class="rl" style="left:1387px;top:417px;width:489px"></div>
<div class="rl" style="left:1387px;top:436px;width:489px"></div>
<div class="rl" style="left:1387px;top:455px;width:489px"></div>
<div class="rl" style="left:1387px;top:474px;width:489px"></div>
<div class="rl" style="left:1687px;top:361px;width:1px;height:113px"></div>
<svg style="left:1392px;top:363px" width="16" height="14"><use href="#chk"/></svg><div class="t k n" style="left:1410px;top:363px">02.04.2015 6:21:00</div><div class="t k n" style="left:1693px;top:363px">000000038</div>
<svg style="left:1392px;top:382px" width="16" height="14"><use href="#chk"/></svg><div class="t k n" style="left:1410px;top:382px">02.04.2015 11:01:00</div><div class="t k n" style="left:1693px;top:382px">000000037</div>
<svg style="left:1392px;top:401px" width="16" height="14"><use href="#chk"/></svg><div class="t k n" style="left:1410px;top:401px">03.04.2015 10:20:00</div><div class="t k n" style="left:1693px;top:401px">000000036</div>
<svg style="left:1392px;top:420px" width="16" height="14"><use href="#chk"/></svg><div class="t w n" style="left:1410px;top:420px">04.04.2015 20:46:00</div><div class="t k n" style="left:1693px;top:420px">000000041</div>
<svg style="left:1392px;top:439px" width="16" height="14"><use href="#chk"/></svg><div class="t k n" style="left:1410px;top:439px">03.05.2015 8:07:00</div><div class="t k n" style="left:1693px;top:439px">000000040</div>
<svg style="left:1392px;top:458px" width="16" height="14"><use href="#chk"/></svg><div class="t k n" style="left:1410px;top:458px">13.03.2016 15:49:00</div><div class="t k n" style="left:1693px;top:458px">000000039</div>
<div style="left:1876px;top:340px;width:16px;height:545px;background:linear-gradient(90deg,#f7f5ea,#fff);border-left:1px solid #e4e0cc;box-sizing:border-box"></div>
<div class="sbtn" style="left:1877px;top:340px;width:15px;height:19px"></div>
<div class="sbtn" style="left:1877px;top:606px;width:15px;height:14px;border-top:1px solid #e4e0cc"></div>
<div class="sbtn" style="left:1877px;top:867px;width:15px;height:18px;border-bottom:0;border-top:1px solid #d8d4bc;box-sizing:border-box"></div>
<svg style="left:1878px;top:345px" width="12" height="9"><path d="M6 0l5 8.500H1z" fill="#8f8f8f"/></svg>
<svg style="left:1878px;top:873px" width="12" height="8"><path d="M6 7L1.500 0h9z" fill="#8f8f8f"/></svg>
<div class="dot" style="left:1629px;top:890px"></div><div class="dot" style="left:1639px;top:890px"></div><div class="dot" style="left:1649px;top:890px"></div>
<div style="left:1386px;top:895px;width:507px;height:71px;box-sizing:border-box;border:1px solid #b3ab7f;border-radius:3px"></div>
<div class="t k" style="left:1389px;top:897px">Андромеда, стар трек</div>

<!-- bottom -->
<div style="left:0;top:988px;width:1920px;height:30px;background:#bebebe"></div>
<div class="k" style="left:3px;top:992px;width:88px;height:23px;box-sizing:border-box;border:1px solid #b3ab7f;border-radius:4px;background:linear-gradient(#fdfdfd,#dcdfe2);text-align:center;line-height:23px;font-size:11px">История...</div>
</body></html>
